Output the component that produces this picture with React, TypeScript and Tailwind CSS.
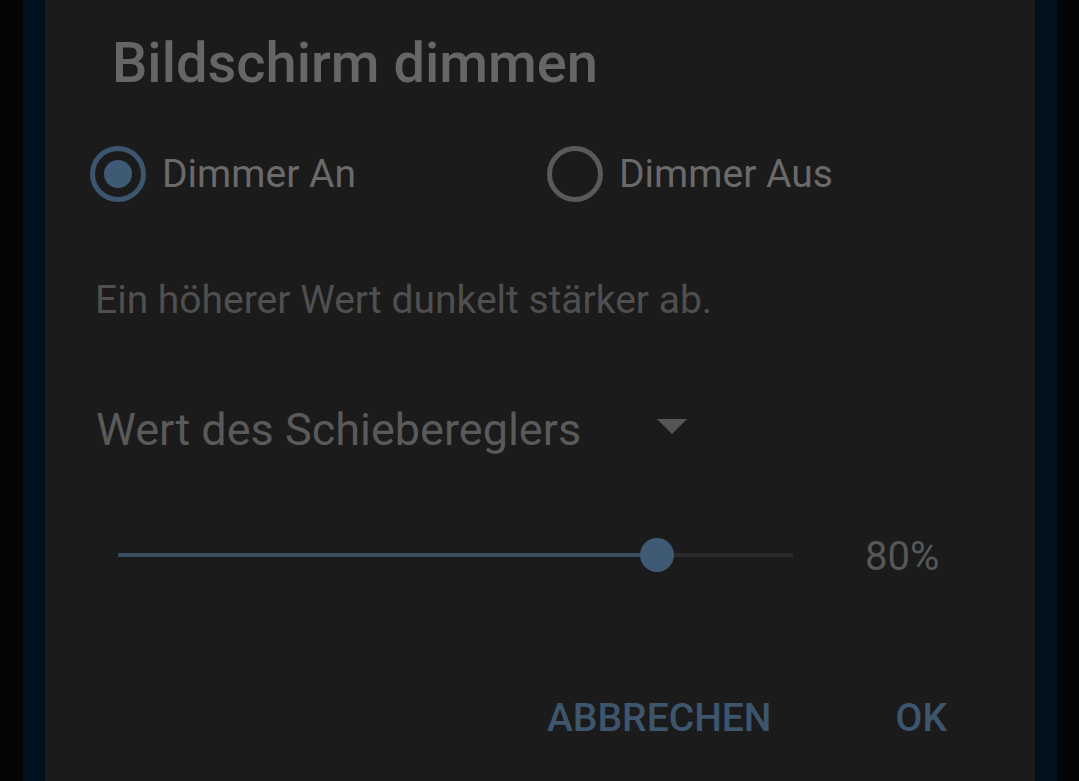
import React from "react";

export default function App() {
  return (
    <div
      className="flex h-[781px] w-[1079px] overflow-hidden bg-black"
      style={{ fontFamily: "Roboto, 'Liberation Sans', sans-serif" }}
    >
      <div className="w-[23px] shrink-0 bg-[#040404]" />
      <div className="w-[22px] shrink-0 bg-[#01111e]" />
      <div className="flex w-[990px] shrink-0 flex-col bg-[#1b1b1b]">
        {/* Title */}
        <div className="flex h-[126px] shrink-0 items-center pl-[67px]">
          <span className="text-[56px] font-medium leading-none text-[#666666]">
            Bildschirm dimmen
          </span>
        </div>
        {/* Radios */}
        <div className="flex h-[96px] shrink-0 items-center pl-[45px]">
          <div className="flex w-[457px] items-center">
            <div className="flex h-[56px] w-[56px] items-center justify-center rounded-full border-[5px] border-[#3d566f]">
              <div className="h-[28px] w-[28px] rounded-full bg-[#3f5a74]" />
            </div>
            <span className="ml-[16px] text-[39px] leading-none text-[#6a6a6a]">
              Dimmer An
            </span>
          </div>
          <div className="flex items-center">
            <div className="h-[56px] w-[56px] rounded-full border-[5px] border-[#5a5a5a]" />
            <span className="ml-[16px] text-[39px] leading-none text-[#6a6a6a]">
              Dimmer Aus
            </span>
          </div>
        </div>
        {/* Description */}
        <div className="flex h-[156px] shrink-0 items-center pl-[50px]">
          <span className="text-[39px] leading-none text-[#4f4f4f]">
            Ein höherer Wert dunkelt stärker ab.
          </span>
        </div>
        {/* Dropdown */}
        <div className="flex h-[102px] shrink-0 items-center pl-[51px]">
          <span className="w-[561px] text-[45px] leading-none text-[#5a5a5a]">
            Wert des Schiebereglers
          </span>
          <svg width="30" height="16" viewBox="0 0 30 16" className="mt-[-4px]">
            <polygon points="0,0 30,0 15,15" fill="#555555" />
          </svg>
        </div>
        {/* Slider */}
        <div className="flex h-[150px] shrink-0 items-center pl-[73px]">
          <div className="relative flex h-[34px] w-[675px] items-center">
            <div className="flex h-[4px] w-full">
              <div className="h-full w-[539px] bg-[#3a4e61]" />
              <div className="h-full flex-1 bg-[#2a2a2a]" />
            </div>
            <div className="absolute left-[522px] top-0 h-[34px] w-[34px] rounded-full bg-[#3e5a75]" />
          </div>
          <span className="ml-[72px] mt-[4px] text-[40px] leading-none text-[#575757]">
            80%
          </span>
        </div>
        {/* Buttons */}
        <div className="flex h-[176px] shrink-0 items-center pl-[502px]">
          <span className="text-[39px] font-medium leading-none text-[#3d566e]">
            ABBRECHEN
          </span>
          <span className="ml-[124px] text-[39px] font-medium leading-none text-[#3d566e]">
            OK
          </span>
        </div>
      </div>
      <div className="w-[22px] shrink-0 bg-[#01111e]" />
      <div className="w-[22px] shrink-0 bg-[#040404]" />
    </div>
  );
}
